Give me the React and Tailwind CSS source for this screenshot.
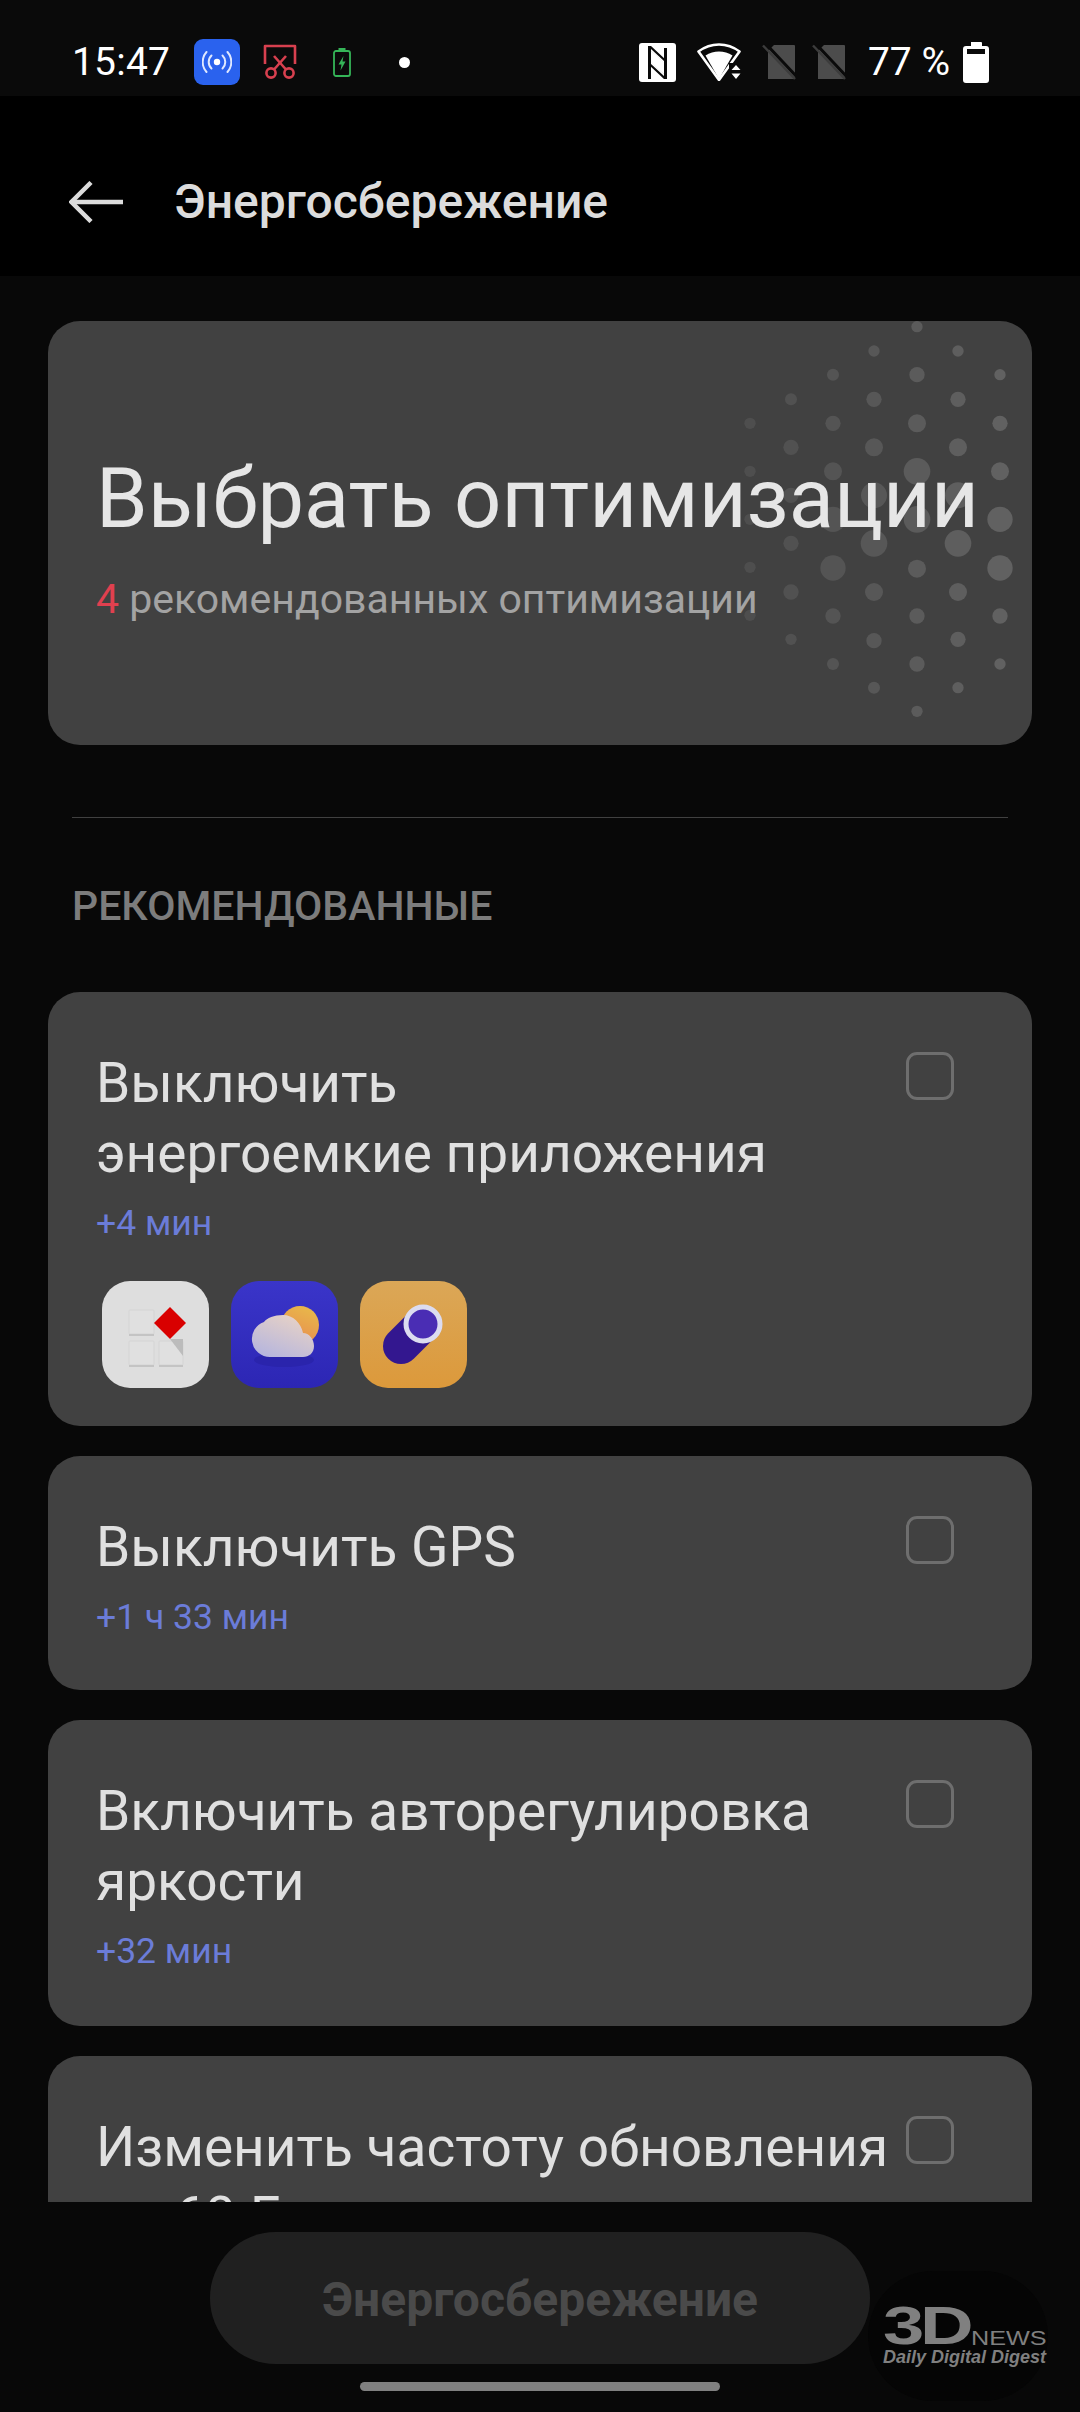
const DOTS = [
  [750, [[340,34],[484,34],[628,34],[772,34],[916,34]]],
  [791, [[268,36],[412,46],[556,46],[700,46],[846,46],[988,34]]],
  [833, [[194,36],[340,46],[484,54],[628,76],[774,76],[918,46],[1062,36]]],
  [874, [[123,34],[268,46],[412,54],[556,78],[700,80],[846,54],[992,46],[1133,36]]],
  [917, [[50,34],[194,46],[340,54],[484,80],[628,80],[776,54],[918,46],[1062,46],[1204,34]]],
  [958, [[123,34],[268,46],[412,54],[556,78],[700,80],[846,54],[988,46],[1133,34]]],
  [1000, [[194,34],[340,46],[484,54],[628,76],[774,76],[918,46],[1062,34]]],
];

function DotField() {
  return (
    <svg className="absolute left-0 top-0" width="984" height="424" viewBox="0 0 984 424">
      {DOTS.map(([x, col]) =>
        col.map(([y, d]) => {
          const cx = x - 48;
          const cy = y / 3 + 310 - 321;
          const o = 0.07 + ((x - 750) / 250) * 0.1;
          return <circle key={`${x}-${y}`} cx={cx} cy={cy} r={d / 6} fill="#ffffff" fillOpacity={o} />;
        })
      )}
    </svg>
  );
}

function Broadcast() {
  return (
    <div className="w-[46px] h-[46px] rounded-[9px] bg-[#2a62ee] flex items-center justify-center">
      <svg width="30" height="24" viewBox="0 0 30 24" fill="none" stroke="#dfe8ff" strokeWidth="2" strokeLinecap="round">
        <circle cx="15" cy="12" r="3.2" fill="#fff" stroke="none" />
        <path d="M9.5 5.5a9 9 0 0 0 0 13" />
        <path d="M20.5 5.5a9 9 0 0 1 0 13" />
        <path d="M4.5 2a15 15 0 0 0 0 20" />
        <path d="M25.5 2a15 15 0 0 1 0 20" />
      </svg>
    </div>
  );
}

function Scissors() {
  return (
    <svg width="34" height="36" viewBox="0 0 34 36" fill="none" stroke="#d8404f" strokeWidth="2.6">
      <path d="M2 20V2h30v18" strokeLinejoin="round" />
      <circle cx="8" cy="29" r="4.6" />
      <circle cx="26" cy="29" r="4.6" />
      <path d="M11 25.500 23 12" />
      <path d="M23 25.500 11 12" />
    </svg>
  );
}

function GreenBattery() {
  return (
    <svg width="18" height="29" viewBox="0 0 18 29" fill="none">
      <path d="M5.500 1.500h7" stroke="#35b558" strokeWidth="3" />
      <rect x="1" y="3" width="16" height="25" rx="2" stroke="#35b558" strokeWidth="1.800" />
      <path d="M10.500 8 5.500 16.500h3l-1 6 5-9h-3z" fill="#35b558" />
    </svg>
  );
}

function Nfc() {
  return (
    <svg width="37" height="39" viewBox="0 0 37 39">
      <rect width="37" height="39" rx="3" fill="#fff" />
      <path d="M9 3h3v33H9zM9 3h3l15 14v4L9 5z" fill="#0a0a0a" />
      <path d="M28 36h-3V5h3zM28 36h-3L10 22v-4l18 16z" fill="#0a0a0a" />
      <path d="M12 8 25 20v-2L12 6zM25 31 12 19v2l13 12z" fill="#fff" />
    </svg>
  );
}

function Wifi() {
  return (
    <svg width="46" height="38" viewBox="0 0 46 38">
      <path d="M22 1.500C14.500 1.500 7.500 4 1.500 8.500L22 37 42.500 8.500C36.500 4 29.500 1.500 22 1.500z" fill="none" stroke="#fff" strokeWidth="2.600" strokeLinejoin="round" />
      <path d="M8.500 12.500c8-5.500 19-5.500 27 0L22 36z" fill="#fff" />
      <path d="M32 20h14v20H32z" fill="#0a0a0a" />
      <path d="M39 22l4.500 5h-9zM34.500 30.500h9L39 36z" fill="#fff" />
    </svg>
  );
}

function NoSim() {
  return (
    <svg width="34" height="36" viewBox="0 0 34 36">
      <path d="M12 1h20a1 1 0 0 1 1 1v33H6V7z" fill="#4c4c4c" />
      <path d="M3.500 -0.500 35 33" stroke="#0a0a0a" strokeWidth="3" />
      <path d="M1 1.500 33 35" stroke="#3c3c3c" strokeWidth="2.500" />
    </svg>
  );
}

function Battery() {
  return (
    <svg width="26" height="41" viewBox="0 0 26 41">
      <path d="M8 0h10a1 1 0 0 1 1 1v3h4a3 3 0 0 1 3 3v31a3 3 0 0 1-3 3H3a3 3 0 0 1-3-3V7a3 3 0 0 1 3-3h5V1z" fill="#fff" />
      <rect x="4" y="7" width="18" height="5" fill="#0a0a0a" />
    </svg>
  );
}

function StatusBar() {
  return (
    <div className="h-[96px] bg-[#0a0a0a] flex items-center pt-[28px] pl-[72px] pr-[91px] text-white text-[39px] leading-none">
      <span className="w-[122px] tracking-[0.2px] pt-[1px]">15:47</span>
      <div className="flex items-center">
        <Broadcast />
        <div className="ml-[23px]"><Scissors /></div>
        <div className="ml-[36px]"><GreenBattery /></div>
        <div className="ml-[48px] w-[11px] h-[11px] rounded-full bg-white" />
      </div>
      <div className="ml-auto flex items-center">
        <Nfc />
        <div className="ml-[21px]"><Wifi /></div>
        <div className="ml-[19px]"><NoSim /></div>
        <div className="ml-[16px]"><NoSim /></div>
        <span className="ml-[22px] whitespace-nowrap">77 %</span>
        <div className="ml-[13px]"><Battery /></div>
      </div>
    </div>
  );
}

function Header() {
  return (
    <div className="h-[180px] bg-black flex items-center pt-[32px] pl-[69px]">
      <svg width="54" height="42" viewBox="0 0 54 42" fill="none" stroke="#dcdcdc" strokeWidth="4.500">
        <path d="M2 21h52" />
        <path d="M22 1.500 2.500 21 22 40.500" />
      </svg>
      <span className="ml-[51px] text-[48px] font-medium text-[#dcdcdc] leading-none">Энергосбережение</span>
    </div>
  );
}

function Hero() {
  return (
    <div className="relative h-[424px] rounded-[32px] bg-[#414141] overflow-hidden px-[48px] pt-[128px]">
      <DotField />
      <div className="relative text-[83px] leading-[100px] text-[#e6e6e6] whitespace-nowrap">Выбрать оптимизации</div>
      <div className="relative mt-[25px] text-[41px] leading-[50px] text-[#a3a3a3] whitespace-nowrap">
        <span className="text-[#e0404f]">4</span> рекомендованных оптимизации
      </div>
    </div>
  );
}

function Check() {
  return <div className="w-[48px] h-[48px] shrink-0 rounded-[11px] border-[3px] border-[#6e6e6e]" />;
}

function OptionCard({ lines, meta, children, extra = "pb-[40px]" }) {
  return (
    <div className={`rounded-[32px] bg-[#414141] pl-[48px] pr-[78px] pt-[56px] flex justify-between ${extra}`}>
      <div className="min-w-0">
        <div className="text-[55px] leading-[70px] text-[#e0e0e0] whitespace-nowrap">
          {lines.map((l) => <div key={l}>{l}</div>)}
        </div>
        {meta && <div className="mt-[2px] text-[35.500px] leading-[66px] text-[#6b7cd8]">{meta}</div>}
        {children}
      </div>
      <div className="mt-[4px]"><Check /></div>
    </div>
  );
}

function AppIcons() {
  return (
    <div className="mt-[25px] ml-[6px] -mb-[4px] flex gap-[22px]">
      <svg width="107" height="107" viewBox="0 0 107 107">
        <rect width="107" height="107" rx="28" fill="#dedede" />
        <g fill="#e0e0e0" stroke="#d4d4d4" strokeWidth="1">
          <rect x="27" y="29" width="25" height="24" rx="1" />
          <rect x="27" y="60" width="25" height="24" rx="1" />
          <rect x="57" y="60" width="24" height="24" rx="1" />
        </g>
        <path d="M27 54h25M27 85h25M57 85h24" stroke="#c4c4c4" strokeWidth="2" />
        <path d="M68 58h13v17z" fill="#bcbcbc" />
        <path d="M68 26 84 42 68 58 52 42z" fill="#d90000" />
      </svg>
      <svg width="107" height="107" viewBox="0 0 107 107">
        <defs>
          <linearGradient id="sun" x1="0.700" y1="0" x2="0.300" y2="1">
            <stop offset="0" stopColor="#e8b84a" />
            <stop offset="1" stopColor="#e88a50" />
          </linearGradient>
          <linearGradient id="cloud" x1="0.800" y1="0" x2="0.200" y2="1">
            <stop offset="0" stopColor="#e9d3c5" />
            <stop offset="1" stopColor="#b5b5de" />
          </linearGradient>
          <linearGradient id="blue" x1="0" y1="0" x2="0" y2="1">
            <stop offset="0" stopColor="#3a35c9" />
            <stop offset="1" stopColor="#2c26b4" />
          </linearGradient>
        </defs>
        <rect width="107" height="107" rx="28" fill="url(#blue)" />
        <ellipse cx="53" cy="79" rx="30" ry="7" fill="#2a24ac" />
        <circle cx="69" cy="44" r="19" fill="url(#sun)" />
        <path d="M39 76a18 18 0 0 1-6-35C36 37 43 34 52 34 62 34 70 42 72 52 78 52 83 58 83 65 83 72 78 76 72 76z" fill="url(#cloud)" />
      </svg>
      <svg width="107" height="107" viewBox="0 0 107 107">
        <defs>
          <linearGradient id="gold" x1="0" y1="0" x2="0" y2="1">
            <stop offset="0" stopColor="#dba757" />
            <stop offset="1" stopColor="#dc993b" />
          </linearGradient>
        </defs>
        <rect width="107" height="107" rx="28" fill="url(#gold)" />
        <path d="M41 65 63 43" stroke="#33178f" strokeWidth="36" strokeLinecap="round" />
        <circle cx="63" cy="43" r="17" fill="#4a2db4" stroke="#dcdcf0" strokeWidth="5" />
      </svg>
    </div>
  );
}

function Logo() {
  return (
    <div className="absolute left-[868px] top-[2271px] w-[180px] h-[130px] rounded-full bg-[#050505] flex flex-col justify-center pl-[15px]" style={{ fontFamily: '"Liberation Sans", sans-serif' }}>
      <div className="flex items-end h-[40px] text-[#808080]">
        <span className="text-[53px] leading-[40px] font-bold tracking-[-3px] inline-block origin-bottom-left scale-x-[1.400]">3D</span>
        <span className="ml-[26px] text-[21px] leading-[17px] inline-block origin-bottom-left scale-x-[1.200]">NEWS</span>
      </div>
      <div className="mt-[2px] text-[18px] leading-[18px] italic font-bold text-[#808080] whitespace-nowrap">Daily Digital Digest</div>
    </div>
  );
}

export default function App() {
  return (
    <div className="relative w-[1080px] h-[2412px] bg-[#080808] overflow-hidden" style={{ fontFamily: 'Roboto, sans-serif' }}>
      <StatusBar />
      <Header />
      <div className="h-[1926px] overflow-hidden px-[48px] pt-[45px]">
        <Hero />
        <div className="mx-[24px] mt-[72px] border-t border-[#404040]" />
        <div className="ml-[24px] mt-[64px] h-[48px] text-[41px] leading-[48px] font-medium text-[#7c7c7c]">РЕКОМЕНДОВАННЫЕ</div>
        <div className="mt-[62px] flex flex-col gap-[30px]">
          <OptionCard lines={["Выключить", "энергоемкие приложения"]} meta="+4 мин" extra="pb-[42px]">
            <AppIcons />
          </OptionCard>
          <OptionCard lines={["Выключить GPS"]} meta="+1 ч 33 мин" />
          <OptionCard lines={["Включить авторегулировка", "яркости"]} meta="+32 мин" extra="pb-[42px]" />
          <OptionCard lines={["Изменить частоту обновления", "до 60 Гц"]} meta="+10 мин" />
        </div>
      </div>
      <div className="mt-[30px] flex justify-center">
        <div className="w-[660px] h-[132px] rounded-full bg-[#202020] pt-[3px] flex items-center justify-center text-[48px] font-bold text-[#4a4a4a]">Энергосбережение</div>
      </div>
      <div className="mt-[18px] mx-auto w-[360px] h-[9px] rounded-full bg-[#808080]" />
      <Logo />
    </div>
  );
}
